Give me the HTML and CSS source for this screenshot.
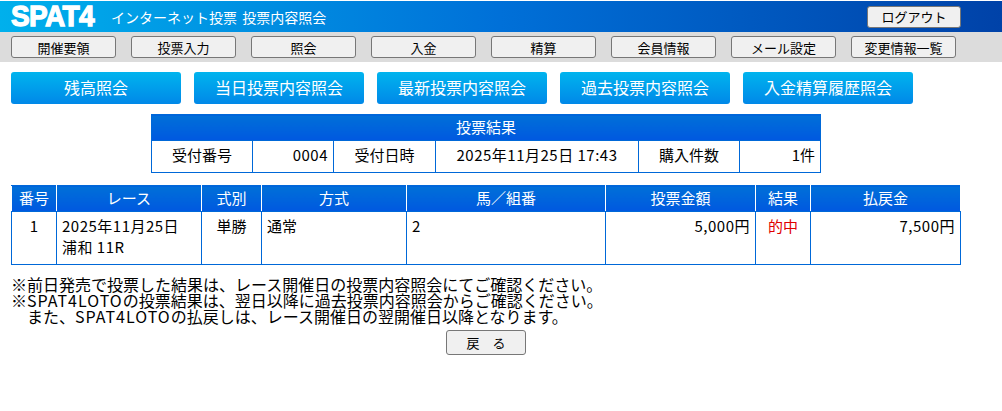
FILE: index.html
```html
<!DOCTYPE html>
<html lang="ja">
<head>
<meta charset="utf-8">
<title>投票内容照会</title>
<link rel="stylesheet" href="styles.css">
</head>
<body>
<header class="top">
  <span class="logo">SPAT4</span>
  <span class="page-title">インターネット投票 投票内容照会</span>
  <button class="logout">ログアウト</button>
</header>
<nav class="menu">
  <a class="menu-btn">開催要領</a>
  <a class="menu-btn">投票入力</a>
  <a class="menu-btn">照会</a>
  <a class="menu-btn">入金</a>
  <a class="menu-btn">精算</a>
  <a class="menu-btn">会員情報</a>
  <a class="menu-btn">メール設定</a>
  <a class="menu-btn">変更情報一覧</a>
</nav>
<div class="tabs">
  <a class="tab">残高照会</a>
  <a class="tab">当日投票内容照会</a>
  <a class="tab">最新投票内容照会</a>
  <a class="tab">過去投票内容照会</a>
  <a class="tab">入金精算履歴照会</a>
</div>
<table class="summary">
  <colgroup>
    <col class="s1"><col class="s2"><col class="s3"><col class="s4"><col class="s5"><col class="s6">
  </colgroup>
  <tr><th colspan="6">投票結果</th></tr>
  <tr>
    <td class="c">受付番号</td><td class="r num">0004</td>
    <td class="c">受付日時</td><td class="c num">2025年11月25日 17:43</td>
    <td class="c">購入件数</td><td class="r">1件</td>
  </tr>
</table>
<table class="results">
  <colgroup>
    <col class="m1"><col class="m2"><col class="m3"><col class="m4"><col class="m5"><col class="m6"><col class="m7"><col class="m8">
  </colgroup>
  <tr><th>番号</th><th>レース</th><th>式別</th><th>方式</th><th>馬／組番</th><th>投票金額</th><th>結果</th><th>払戻金</th></tr>
  <tr>
    <td class="c">1</td>
    <td class="num">2025年11月25日<br>浦和 11R</td>
    <td class="c">単勝</td>
    <td>通常</td>
    <td>2</td>
    <td class="r num">5,000円</td>
    <td class="c hit">的中</td>
    <td class="r num">7,500円</td>
  </tr>
</table>
<div class="notes">
  <p>※前日発売で投票した結果は、レース開催日の投票内容照会にてご確認ください。</p>
  <p>※<span class="latin">SPAT4LOTO</span>の投票結果は、翌日以降に過去投票内容照会からご確認ください。</p>
  <p class="indent">また、<span class="latin">SPAT4LOTO</span>の払戻しは、レース開催日の翌開催日以降となります。</p>
</div>
<div class="back-row"><button class="back">戻　る</button></div>
</body>
</html>
```
FILE: styles.css
```css
* { box-sizing: border-box; }
html, body { margin: 0; padding: 0; }
body {
  background: #fff;
  color: #000;
  font-family: "Noto Sans CJK JP", "Liberation Sans", sans-serif;
  font-size: 15px;
  overflow: hidden;
}
.top {
  height: 31px;
  margin-top: 1px;
  display: flex;
  align-items: center;
  padding-left: 11px;
  background: linear-gradient(90deg, #00b0ec 0%, #0070d8 50%, #0042a8 100%);
  color: #fff;
}
.logo {
  width: 87px;
  font-family: "Liberation Sans", sans-serif;
  font-weight: 700;
  font-size: 28px;
  line-height: 28px;
  letter-spacing: -0.6px;
  -webkit-text-stroke: 1.2px #fff;
  transform: scaleY(1.05);
  transform-origin: center;
}
.page-title {
  margin-left: 13px;
  font-size: 14px;
  word-spacing: 2px;
  white-space: nowrap;
  flex: 1;
}
.logout {
  width: 94px;
  height: 22px;
  margin: 0 41px 0 0;
  padding: 0;
  border: 1px solid #777;
  border-radius: 3px;
  background: #f0f0f0;
  font: inherit;
  font-size: 13px;
  color: #000;
}
.menu {
  height: 30px;
  background: #dcdcdc;
  display: flex;
  gap: 15px;
  padding: 4px 0 0 11px;
}
.menu-btn {
  width: 105px;
  height: 22px;
  border: 1px solid #777;
  border-radius: 3px;
  background: #f0f0f0;
  font-size: 13px;
  line-height: 21px;
  text-align: center;
}
.tabs {
  display: flex;
  gap: 13px;
  padding: 10px 0 0 11px;
}
.tab {
  width: 170px;
  height: 32px;
  border-radius: 3px;
  background: linear-gradient(180deg, #00b4ee, #0088e8);
  color: #fff;
  font-size: 16px;
  line-height: 30px;
  text-align: center;
}
table {
  border-collapse: collapse;
  table-layout: fixed;
}
th, td {
  border: 1px solid #0068d8;
  font-weight: 400;
  padding: 0 5px;
}
th {
  background: linear-gradient(180deg, #0070d8, #0058e0);
  color: #fff;
  text-align: center;
  border-color: #0068d8 #fff;
  height: 26px;
  padding: 0 0 3px;
}
.summary {
  width: 669px;
  margin: 10px 0 0 151px;
}
.summary th { border-color: #0068d8; }
.summary td { height: 32px; padding-bottom: 5px; }
.s1 { width: 101px; }
.s2 { width: 81px; }
.s3 { width: 102px; }
.s4 { width: 203px; }
.s5 { width: 101px; }
.s6 { width: 81px; }
.results {
  width: 949px;
  margin: 12px 0 0 11px;
}
.results td {
  height: 53px;
  vertical-align: top;
  line-height: 21px;
  padding-top: 3px;
}
.m1 { width: 45px; }
.m2 { width: 145px; }
.m3 { width: 60px; }
.m4 { width: 145px; }
.m5 { width: 199px; }
.m6 { width: 150px; }
.m7 { width: 55px; }
.m8 { width: 150px; }
.num { letter-spacing: 0.5px; }
.c { text-align: center; }
.r { text-align: right; }
.hit { color: #e00000; }
.notes {
  margin: 11px 0 0 11px;
  font-size: 16px;
  line-height: 16px;
}
.notes p { margin: 0; white-space: nowrap; }
.notes .indent { padding-left: 16px; }
.latin { letter-spacing: 1px; }
.back-row {
  display: flex;
  justify-content: center;
  margin-top: 6px;
  padding-right: 30px;
}
.back {
  width: 80px;
  height: 25px;
  padding: 0;
  border: 1px solid #777;
  border-radius: 3px;
  background: #f0f0f0;
  font: inherit;
  font-size: 13px;
  color: #000;
}
```
